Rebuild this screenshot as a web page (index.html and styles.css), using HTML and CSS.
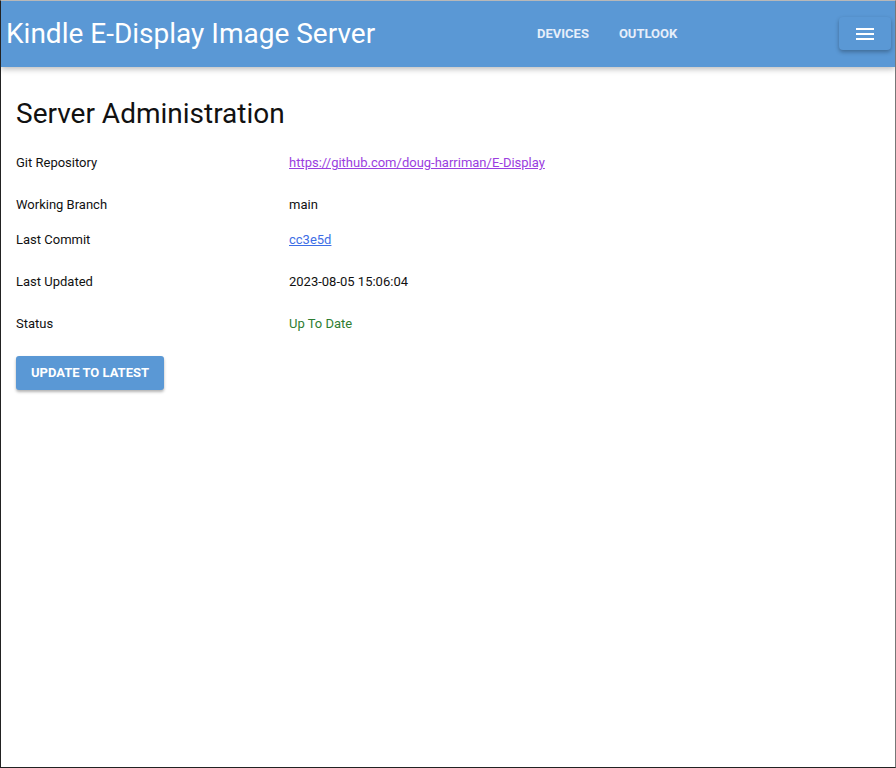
FILE: index.html
```html
<!DOCTYPE html>
<html>
<head>
<meta charset="utf-8">
<link rel="stylesheet" href="styles.css">
</head>
<body>
<div class="frame">
  <header class="topbar">
    <div class="brand">Kindle E-Display Image Server</div>
    <nav class="nav">
      <a class="nav-link">DEVICES</a>
      <a class="nav-link">OUTLOOK</a>
    </nav>
    <button class="menu-btn" aria-label="menu">
      <svg width="18" height="12" viewBox="0 0 18 12"><rect x="0" y="0" width="18" height="2" fill="#fff"/><rect x="0" y="5" width="18" height="2" fill="#fff"/><rect x="0" y="10" width="18" height="2" fill="#fff"/></svg>
    </button>
  </header>
  <main class="content">
    <h1 class="title">Server Administration</h1>
    <div class="info">
      <div class="row r42"><span class="label">Git Repository</span><a class="value link visited" href="#">https://github.com/doug-harriman/E-Display</a></div>
      <div class="row r35"><span class="label">Working Branch</span><span class="value">main</span></div>
      <div class="row r42"><span class="label">Last Commit</span><a class="value link" href="#">cc3e5d</a></div>
      <div class="row r42"><span class="label">Last Updated</span><span class="value">2023-08-05 15:06:04</span></div>
      <div class="row r40"><span class="label">Status</span><span class="value ok">Up To Date</span></div>
    </div>
    <button class="update-btn">UPDATE TO LATEST</button>
  </main>
</div>
</body>
</html>
```
FILE: styles.css
```css
html, body { margin: 0; padding: 0; }
body { font-family: Roboto, "Liberation Sans", sans-serif; color: #111; background: #fff; }
.frame {
  box-sizing: border-box;
  width: 896px; height: 768px;
  border-left: 1px solid #222;
  border-top: 1px solid #b8b8b8;
  border-right: 1px solid #777;
  border-bottom: 1px solid #222;
  overflow: hidden;
}
.topbar {
  height: 66px;
  background: #5a98d5;
  display: flex;
  align-items: center;
  box-shadow: 0 2px 6px rgba(0,0,0,0.28);
  position: relative;
}
.brand {
  color: #fff;
  font-size: 28px;
  padding-left: 5px;
  width: 511px;
  margin-top: -2px;
}
.nav { display: flex; gap: 30px; padding-left: 20px; margin-top: -1px; }
.nav-link { color: #e6eefa; font-size: 13px; font-weight: 700; }
.menu-btn {
  margin-left: auto;
  margin-right: 4px;
  margin-top: -1px;
  width: 52px; height: 33px;
  background: #5a98d5;
  border: none; border-radius: 4px;
  box-shadow: 0 2px 4px rgba(0,0,0,0.3);
  display: flex; align-items: center; justify-content: center;
  padding: 0;
}
.content { padding: 0 15px; }
.title { font-size: 28px; font-weight: 400; margin: 31px 0 0 0; line-height: 32px; }
.info { margin-top: 25px; }
.row { display: flex; font-size: 13px; line-height: 16px; align-items: flex-start; }
.r42 { height: 42px; }
.r35 { height: 35px; }
.r40 { height: 40px; }
.label { width: 273px; }
.value { color: #111; }
.link { color: #3d6ee6; text-decoration: underline; }
.visited { color: #9b3ee0; }
.ok { color: #2e7d32; }
.update-btn {
  margin-top: 0;
  background: #5a98d5;
  color: #fff;
  border: none; border-radius: 3px;
  font-family: Roboto, "Liberation Sans", sans-serif;
  font-weight: 700; font-size: 13px;
  width: 148px; height: 34px;
  box-shadow: 0 2px 3px rgba(0,0,0,0.3);
  padding: 0 0 2px 0;
}
```
